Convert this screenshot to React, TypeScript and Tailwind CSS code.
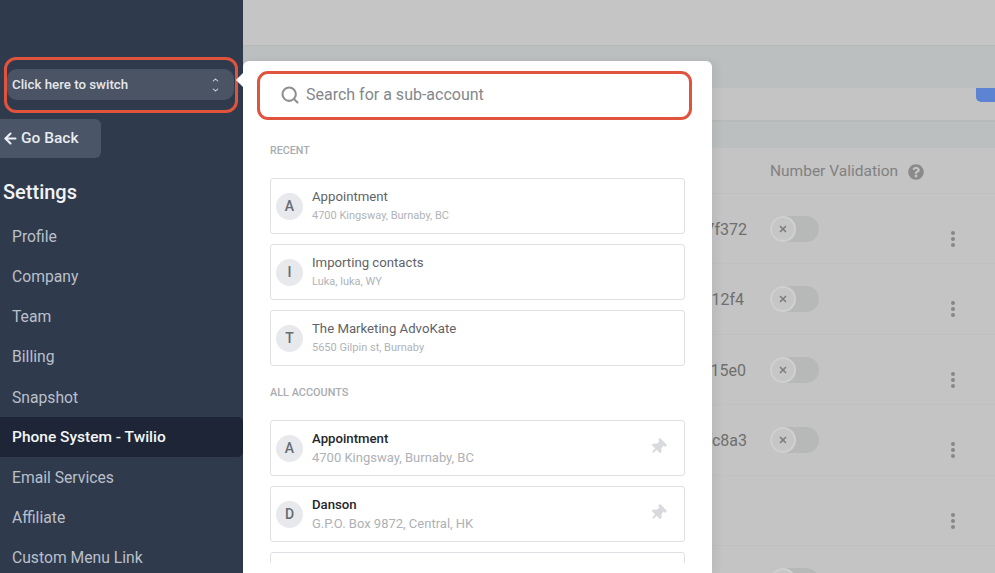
import { ArrowLeft, ChevronDown, ChevronUp, Search, X } from "lucide-react";
import { FaQuestionCircle, FaThumbtack } from "react-icons/fa";

const navItems = [
  "Profile",
  "Company",
  "Team",
  "Billing",
  "Snapshot",
  "Phone System - Twilio",
  "Email Services",
  "Affiliate",
  "Custom Menu Link",
];

const recent = [
  { letter: "A", name: "Appointment", address: "4700 Kingsway, Burnaby, BC" },
  { letter: "I", name: "Importing contacts", address: "Luka, luka, WY" },
  { letter: "T", name: "The Marketing AdvoKate", address: "5650 Gilpin st, Burnaby" },
];

const allAccounts = [
  { letter: "A", name: "Appointment", address: "4700 Kingsway, Burnaby, BC" },
  { letter: "D", name: "Danson", address: "G.P.O. Box 9872, Central, HK" },
];

const rows = [
  { hash: "a90e7f372", toggle: true, hashClass: "pr-0" },
  { hash: "b4c112f4", toggle: true, hashClass: "pr-[3px]" },
  { hash: "c7a15e0", toggle: true, hashClass: "pr-[1px]" },
  { hash: "d02fc8a3", toggle: true, hashClass: "pr-0" },
  { hash: "", toggle: false, hashClass: "pr-0" },
  { hash: "", toggle: true, hashClass: "pr-0" },
];

function Toggle() {
  return (
    <div className="flex h-[26px] w-[49px] items-center rounded-full bg-[#b7b9b9]">
      <div className="flex h-[26px] w-[26px] items-center justify-center rounded-full border-2 border-[#d0d0d0] bg-[#c6c6c6]">
        <X className="h-[10px] w-[10px] text-[#7d7d7d]" strokeWidth={4} />
      </div>
    </div>
  );
}

function Dots() {
  return (
    <div className="flex flex-col gap-[2px]">
      <span className="h-[4px] w-[4px] rounded-full bg-[#878787]" />
      <span className="h-[4px] w-[4px] rounded-full bg-[#878787]" />
      <span className="h-[4px] w-[4px] rounded-full bg-[#878787]" />
    </div>
  );
}

function AccountCard({
  letter,
  name,
  address,
  strong,
}: {
  letter: string;
  name: string;
  address: string;
  strong?: boolean;
}) {
  return (
    <div className="flex h-[56px] shrink-0 items-center rounded-[3px] border border-[#dfe0e3] pl-[5px] pr-[18px]">
      <div className="flex h-[27px] w-[27px] shrink-0 items-center justify-center rounded-full bg-[#e8e9ed] text-[14px] font-medium text-[#666b72]">
        {letter}
      </div>
      <div className="ml-[9px] flex-1 pt-[1px]">
        <p
          className={
            strong
              ? "text-[13.2px] leading-[18px] font-medium text-[#25272b]"
              : "text-[13.2px] leading-[18px] text-[#5f6368]"
          }
        >
          {name}
        </p>
        <p
          className={
            strong
              ? "mt-[1px] text-[13px] leading-[18px] text-[#aeb1b6]"
              : "mt-[1px] text-[11px] leading-[18px] text-[#b0b3b8]"
          }
        >
          {address}
        </p>
      </div>
      {strong && <FaThumbtack className="mb-[3px] h-[16px] w-[16px] rotate-45 text-[#d9dadd]" />}
    </div>
  );
}

export default function App() {
  return (
    <div className="flex h-screen w-full overflow-hidden bg-[#c4c4c4] font-['Roboto',sans-serif]">
      <aside className="flex w-[243px] shrink-0 flex-col bg-[#303a4d] pt-[69px]">
        <div className="relative mx-[7px] flex h-[31px] w-[227px] shrink-0 items-center justify-between rounded-[10px] bg-[#4a5464] pl-[5px] pr-[14px]">
          <span className="text-[13.3px] font-medium text-[#e4e7ec]">Click here to switch</span>
          <div className="flex flex-col items-center text-[#d5d9df]">
            <ChevronUp className="h-[8px] w-[9px]" strokeWidth={3} preserveAspectRatio="none" />
            <div className="h-[2px]" />
            <ChevronDown className="h-[8px] w-[9px]" strokeWidth={3} preserveAspectRatio="none" />
          </div>
          <div className="absolute -bottom-[13px] -left-[3px] -right-[4px] -top-[12px] rounded-[12px] border-[3px] border-[#e0533d]" />
        </div>

        <div className="mt-[19px] flex h-[39px] w-[101px] shrink-0 items-center gap-[2px] rounded-r-[6px] bg-[#4a5568] pl-[2px]">
          <ArrowLeft className="h-[17px] w-[17px] text-[#eef0f3]" strokeWidth={3} />
          <span className="text-[15.5px] font-medium text-[#e8ebef]">Go Back</span>
        </div>

        <h2 className="mb-[10px] ml-[3px] mt-[20px] shrink-0 text-[20px] font-medium leading-[28px] text-[#f1f3f5]">
          Settings
        </h2>

        <nav className="flex shrink-0 flex-col">
          {navItems.map((item) => (
            <div
              key={item}
              className={
                item === "Phone System - Twilio"
                  ? "flex h-[40.2px] items-center rounded-r-[5px] bg-[#1e2536] pl-[12px] pt-[1px] text-[15.5px] font-medium text-[#f4f5f7]"
                  : "flex h-[40.2px] items-center pl-[12px] pt-[1px] text-[15.7px] text-[#bac0ca]"
              }
            >
              {item}
            </div>
          ))}
        </nav>
      </aside>

      <main className="relative flex-1">
        <div className="h-[46px] border-b border-[#b7b9b9] bg-[#c5c5c5]" />
        <div className="h-[42px] bg-[#bcbfbf]" />
        <div className="flex h-[34px] justify-end border-b-2 border-[#b8baba]">
          <div className="h-[14px] w-[19px] rounded-bl-[5px] bg-[#5d83d3]" />
        </div>
        <div className="h-[26px] bg-[#bcbfbf]" />

        <div className="flex h-[46px] items-center border-b border-[#bfbfbf] pl-[527px] pt-[2px] text-[15.5px] text-[#818181]">
          Number Validation
          <FaQuestionCircle className="ml-[10px] h-[16px] w-[16px] text-[#8a8a8a]" />
        </div>
        {rows.map((row, index) => (
          <div key={index} className="flex h-[70.4px] border-b border-[#c0c0c0] pt-[22px]">
            <div className={`w-[504px] pt-[4px] text-right text-[16px] leading-[20px] text-[#6f6f6f] ${row.hashClass}`}>
              {row.hash}
            </div>
            <div className="ml-[23px] w-[49px]">{row.toggle && <Toggle />}</div>
            <div className="ml-[132px] pt-[15px]">
              {index < 5 && <Dots />}
            </div>
          </div>
        ))}

        {/* sub-account switcher popover */}
        <div className="absolute bottom-0 left-0 top-[61px] flex w-[469px] flex-col rounded-t-[6px] bg-white pb-[10px] pl-[27px] pr-[27px] shadow-[4px_0_8px_rgba(0,0,0,0.06)]">
          <div className="absolute -left-[5px] top-[14px] h-[10px] w-[10px] rotate-45 bg-white" />

          <div className="-ml-[13px] -mr-[7px] mt-[10px] flex h-[49px] shrink-0 items-center rounded-[11px] border-[3px] border-[#e0533d] pb-[2px] pl-[20px]">
            <Search className="h-[20px] w-[20px] text-[#8f8f8f]" strokeWidth={2.5} />
            <span className="ml-[6px] text-[16px] text-[#83878c]">Search for a sub-account</span>
          </div>

          <p className="mt-[24px] text-[10.7px] font-medium leading-[14px] text-[#a9acb0]">RECENT</p>
          <div className="mt-[20px] flex flex-col gap-[10px]">
            {recent.map((account) => (
              <AccountCard key={account.letter} {...account} />
            ))}
          </div>

          <p className="mt-[20px] text-[10.9px] font-medium leading-[14px] text-[#a9acb0]">ALL ACCOUNTS</p>
          <div className="mt-[20px] flex min-h-0 flex-1 flex-col gap-[10px] overflow-hidden">
            {allAccounts.map((account) => (
              <AccountCard key={account.letter} {...account} strong />
            ))}
            <div className="h-[56px] shrink-0 rounded-[3px] border border-[#dfe0e3]" />
          </div>
        </div>
      </main>
    </div>
  );
}
